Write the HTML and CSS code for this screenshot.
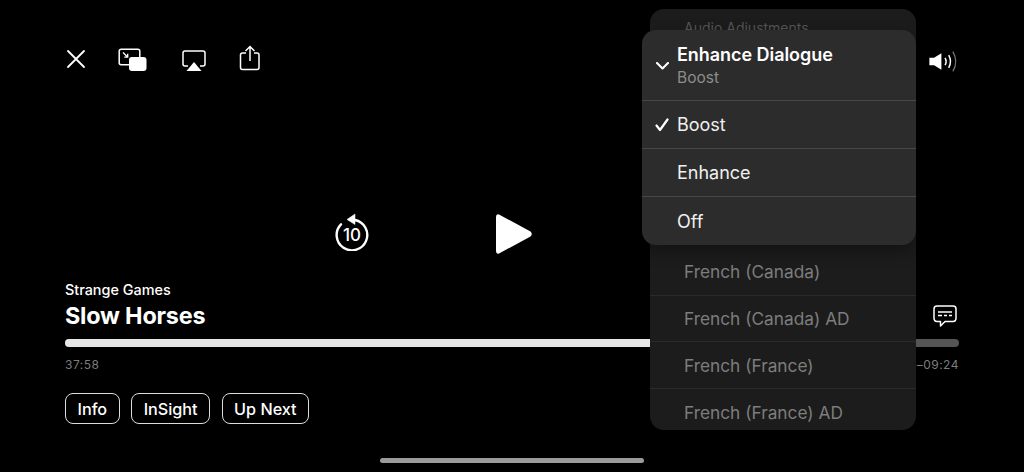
FILE: index.html
```html
<!DOCTYPE html>
<html lang="en">
    <head>
        <meta charset="UTF-8"/>
        <title>Slow Horses</title>
        <link rel="stylesheet" href="styles.css">
    </head>
    <body>
        <div class="player">
          <div class="top-bar">
            <div class="top-icons">
              <svg class="icon-close" width="20" height="20" viewBox="0 0 20 20"><path d="M2 2 L18 18 M18 2 L2 18" stroke="#fff" stroke-width="1.8" stroke-linecap="round" fill="none"/></svg>
              <svg class="icon-pip" width="30" height="24" viewBox="0 0 30 24"><rect x="1.2" y="1.2" width="20.6" height="15.6" rx="2" fill="none" stroke="#fff" stroke-width="1.5"/><path d="M5 4.5 L9.5 9 M9.7 5.8 V9.2 H6.3" stroke="#fff" stroke-width="1.3" fill="none"/><rect x="11" y="9" width="17.5" height="14" rx="3" fill="#fff"/></svg>
              <svg class="icon-airplay" width="24" height="22" viewBox="0 0 24 22"><path d="M6 16 H3 Q1 16 1 14 V3 Q1 1 3 1 H21 Q23 1 23 3 V14 Q23 16 21 16 H18" fill="none" stroke="#fff" stroke-width="1.5"/><path d="M12 12 L19.5 21 H4.5 Z" fill="#fff"/></svg>
              <svg class="icon-share" width="22" height="26" viewBox="0 0 22 26"><path d="M7 8 H3.5 Q1.5 8 1.5 10 V22.5 Q1.5 24.5 3.5 24.5 H18 Q20 24.5 20 22.5 V10 Q20 8 18 8 H15" fill="none" stroke="#fff" stroke-width="1.5"/><path d="M11 16 V2 M6.5 6 L11 1.5 L15.5 6" fill="none" stroke="#fff" stroke-width="1.5"/></svg>
            </div>
            <svg class="icon-volume" width="32" height="23" viewBox="0 0 30 22"><path d="M1 7.5 H5.5 L12.5 3 V19 L5.5 14.5 H1 Z" fill="#fff"/><path d="M16 7.5 Q18 11 16 14.5 M19.5 5 Q23 11 19.5 17" fill="none" stroke="#fff" stroke-width="1.4"/><path d="M23.5 1.5 Q29 11 23.5 20.5" fill="none" stroke="#777" stroke-width="1.2"/></svg>
          </div>

          <div class="transport">
            <svg class="icon-back" width="36" height="38" viewBox="0 0 36 38"><path d="M21 7 A15.3 15.3 0 1 1 7 11.3" fill="none" stroke="#fff" stroke-width="2.4" stroke-linecap="round"/><path d="M21 1 V11.5 L13 6.5 Z" fill="#fff" stroke="#fff" stroke-width="0.5" stroke-linejoin="round"/><text class="back-num" x="18" y="27.5" text-anchor="middle">10</text></svg>
            <svg class="icon-play" width="38" height="42" viewBox="0 0 38 42"><path d="M4 1.5 L35.5 18.5 Q38 21 35.5 23.5 L4 40.5 Q1 41.5 1 38 V4 Q1 0.5 4 1.5 Z" fill="#fff"/></svg>
          </div>

          <div class="info-row">
            <div>
              <div class="episode">Strange Games</div>
              <div class="show">Slow Horses</div>
            </div>
            <svg class="icon-captions" width="24" height="23" viewBox="0 0 24 23"><path d="M4 1 H20 Q23 1 23 4 V13 Q23 16.5 20 16.5 H12 L7.5 21 V16.5 H4 Q1 16.5 1 13 V4 Q1 1 4 1 Z" fill="none" stroke="#fff" stroke-width="1.5" stroke-linejoin="round"/><path d="M5 7 H19 M5 10.5 H9 M11 10.5 H14 M16 10.5 H19" stroke="#fff" stroke-width="1.3" fill="none"/></svg>
          </div>

          <div class="progress"><div class="progress-fill" style="width: 80%"></div></div>
          <div class="times"><span>37:58</span><span>–09:24</span></div>

          <div class="actions">
            <button class="pill">Info</button>
            <button class="pill">InSight</button>
            <button class="pill">Up Next</button>
          </div>

          <div class="home-bar"></div>
        </div>

        <div class="menu-back">
          <div class="menu-back-title">Audio Adjustments</div>
          <div class="menu-back-list">
            <div class="back-row">French (Canada)</div>
            <div class="back-row">French (Canada) AD</div>
            <div class="back-row">French (France)</div>
            <div class="back-row">French (France) AD</div>
          </div>
        </div>

        <div class="menu-front">
          <div class="front-head">
            <svg class="chev" width="13" height="8" viewBox="0 0 13 8"><path d="M1 1 L6.5 6.5 L12 1" fill="none" stroke="#fff" stroke-width="2.1" stroke-linecap="round" stroke-linejoin="round"/></svg>
            <div>
              <div class="front-title">Enhance Dialogue</div>
              <div class="front-sub">Boost</div>
            </div>
          </div>
          <div class="front-row">
            <svg class="check" width="14" height="14" viewBox="0 0 14 14"><path d="M1.5 7.5 L5 12 L12.5 1.5" fill="none" stroke="#fff" stroke-width="2.2" stroke-linecap="round" stroke-linejoin="round"/></svg>
            <span>Boost</span>
          </div>
          <div class="front-row"><span>Enhance</span></div>
          <div class="front-row"><span>Off</span></div>
        </div>
    </body>
</html>
```

FILE: styles.css
```css
body {
  margin: 0;
  background: #000;
  color: #fff;
  font-family: Inter, "Liberation Sans", sans-serif;
  overflow: hidden;
}

svg {
  display: block;
  flex: none;
}

.player {
  height: 472px;
  box-sizing: border-box;
  padding: 44px 65px 0;
  display: flex;
  flex-direction: column;
}

/* top icons */
.top-bar {
  height: 30px;
  display: flex;
  align-items: center;
  justify-content: space-between;
}
.top-icons {
  display: flex;
  align-items: center;
}
.icon-close {
  margin-left: 1px;
}
.icon-pip {
  margin-left: 32px;
  margin-top: 1px;
}
.icon-airplay {
  margin-left: 34px;
  margin-top: 3px;
}
.icon-share {
  margin-left: 33px;
  margin-top: -3px;
}
.icon-volume {
  margin-top: 4px;
  margin-right: -1px;
}

/* rewind + play */
.transport {
  height: 42px;
  margin-top: 139px;
  display: flex;
  align-items: center;
  padding-left: 269px;
}
.back-num {
  font-size: 17px;
  font-weight: 500;
  fill: #fff;
}
.icon-back {
  margin-top: -4px;
}
.icon-play {
  margin-left: 125px;
}

/* title */
.info-row {
  margin-top: 26px;
  display: flex;
  justify-content: space-between;
  align-items: flex-end;
}
.episode {
  font-size: 14.4px;
  font-weight: 500;
  line-height: 18px;
}
.show {
  margin-top: 1px;
  font-size: 23.4px;
  font-weight: 700;
  line-height: 32px;
  letter-spacing: -0.2px;
}
.icon-captions {
  margin-bottom: 4px;
  margin-right: 2px;
}

.progress {
  margin-top: 7px;
  height: 8px;
  border-radius: 4px;
  background: #555;
  overflow: hidden;
}
.progress-fill {
  height: 100%;
  background: #e6e6e6;
}

.times {
  margin-top: 10px;
  display: flex;
  justify-content: space-between;
  font-size: 12px;
  line-height: 16px;
  letter-spacing: 0.5px;
  color: #7c7c7c;
}

.actions {
  margin-top: 20px;
  display: flex;
  gap: 11.5px;
}
.pill {
  height: 31px;
  padding: 0 11.5px;
  background: #000;
  color: #fff;
  border: 1.5px solid #ddd;
  border-radius: 8px;
  font-family: inherit;
  font-size: 16.2px;
  font-weight: 500;
}

.home-bar {
  width: 264px;
  height: 5px;
  margin: 34px auto 0;
  border-radius: 3px;
  background: #9a9a9a;
}

/* back menu, dimmed behind the popup */
.menu-back {
  position: absolute;
  left: 650px;
  top: 9px;
  width: 266px;
  height: 421px;
  border-radius: 14px;
  background: #1c1c1c;
  overflow: hidden;
  color: #7d7d7d;
}
.menu-back-title {
  padding: 11px 0 0 34px;
  font-size: 14px;
  line-height: 15px;
  color: #555;
}
.menu-back-list {
  margin-top: 214px;
}
.back-row {
  height: 46.7px;
  box-sizing: border-box;
  padding-left: 34px;
  display: flex;
  align-items: center;
  font-size: 17.3px;
  border-bottom: 1px solid #2a2a2a;
}
.back-row:last-child {
  border-bottom: 0;
}

/* front popup */
.menu-front {
  position: absolute;
  left: 642px;
  top: 30px;
  width: 274px;
  height: 215px;
  border-radius: 14px;
  background: #2c2c2c;
  box-shadow: 0 6px 16px rgba(0, 0, 0, 0.35);
  overflow: hidden;
}
.front-head {
  height: 71px;
  box-sizing: border-box;
  padding: 13px 0 0 14px;
  display: flex;
  border-bottom: 1px solid #474747;
}
.chev {
  margin-top: 19px;
}
.front-head > div {
  margin-left: 8px;
}
.front-title {
  font-size: 18px;
  font-weight: 600;
  line-height: 24px;
  letter-spacing: -0.05px;
}
.front-sub {
  font-size: 15.5px;
  line-height: 22px;
  color: #8c8c8c;
}
.front-row {
  height: 48px;
  box-sizing: border-box;
  padding-left: 35px;
  display: flex;
  align-items: center;
  font-size: 18px;
  color: #f0f0f0;
  border-bottom: 1px solid #474747;
  position: relative;
}
.front-row:last-child {
  border-bottom: 0;
}
.check {
  position: absolute;
  left: 13px;
  top: 17px;
}
```
